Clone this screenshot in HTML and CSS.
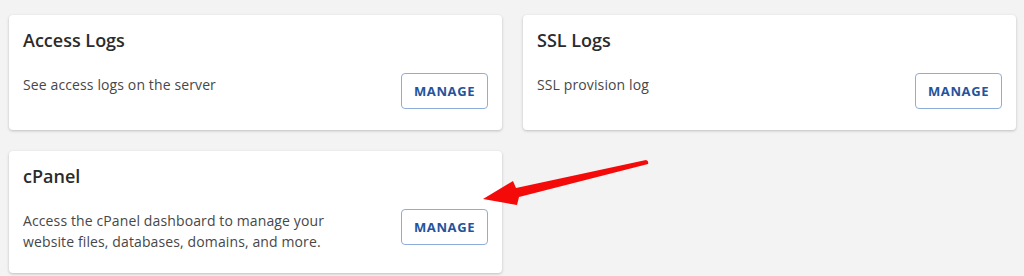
FILE: index.html
```html
<!DOCTYPE html>
<html lang="en">
<head>
<meta charset="utf-8">
<title>Logs</title>
<link rel="stylesheet" href="styles.css">
</head>
<body>
<main class="grid">
  <section class="card">
    <h2 class="card-title">Access Logs</h2>
    <div class="card-body">
      <p class="card-desc">See access logs on the server</p>
      <button class="btn">MANAGE</button>
    </div>
  </section>
  <section class="card">
    <h2 class="card-title">SSL Logs</h2>
    <div class="card-body">
      <p class="card-desc">SSL provision log</p>
      <button class="btn">MANAGE</button>
    </div>
  </section>
  <section class="card">
    <h2 class="card-title">cPanel</h2>
    <div class="card-body">
      <p class="card-desc">Access the cPanel dashboard to manage your website files, databases, domains, and more.</p>
      <button class="btn">MANAGE</button>
    </div>
  </section>
</main>
<svg class="arrow" width="1024" height="276" viewBox="0 0 1024 276" aria-hidden="true">
  <path d="M646 160 Q649 161 648 164 L519 197 L517 205 L483 199 L513 181 L516 188 Z" fill="#f50a0a"/>
</svg>
</body>
</html>
```
FILE: styles.css
```css
* { box-sizing: border-box; }
html, body { margin: 0; padding: 0; }
body {
  background: #f3f3f3;
  font-family: "Open Sans", "Liberation Sans", sans-serif;
  width: 1024px;
  height: 276px;
  overflow: hidden;
  position: relative;
}
.grid {
  display: grid;
  grid-template-columns: 493px 493px;
  column-gap: 21px;
  row-gap: 21px;
  padding: 15px 8px 0 9px;
  align-items: start;
}
.card {
  background: #fff;
  border-radius: 4px;
  box-shadow: 0 1px 3px rgba(0, 0, 0, 0.22);
  padding: 14px 14px 21px 14px;
}
.card-title {
  margin: 0 0 22px 0;
  font-size: 18px;
  line-height: 22px;
  font-weight: 600;
  color: #2b2b2b;
}
.card-body {
  display: flex;
  justify-content: space-between;
  align-items: flex-start;
}
.card-desc {
  margin: 0;
  padding-top: 1px;
  font-size: 14px;
  line-height: 21px;
  letter-spacing: 0.12px;
  color: #474747;
  max-width: 335px;
}
.btn {
  width: 87px;
  height: 36px;
  background: #fff;
  border: 1px solid #8fadd9;
  border-radius: 4px;
  color: #24539c;
  font-family: "Open Sans", "Liberation Sans", sans-serif;
  font-size: 13px;
  font-weight: 700;
  letter-spacing: 0.6px;
  padding: 0;
  flex: none;
}
.arrow {
  position: absolute;
  left: 0;
  top: 0;
  pointer-events: none;
}
```
